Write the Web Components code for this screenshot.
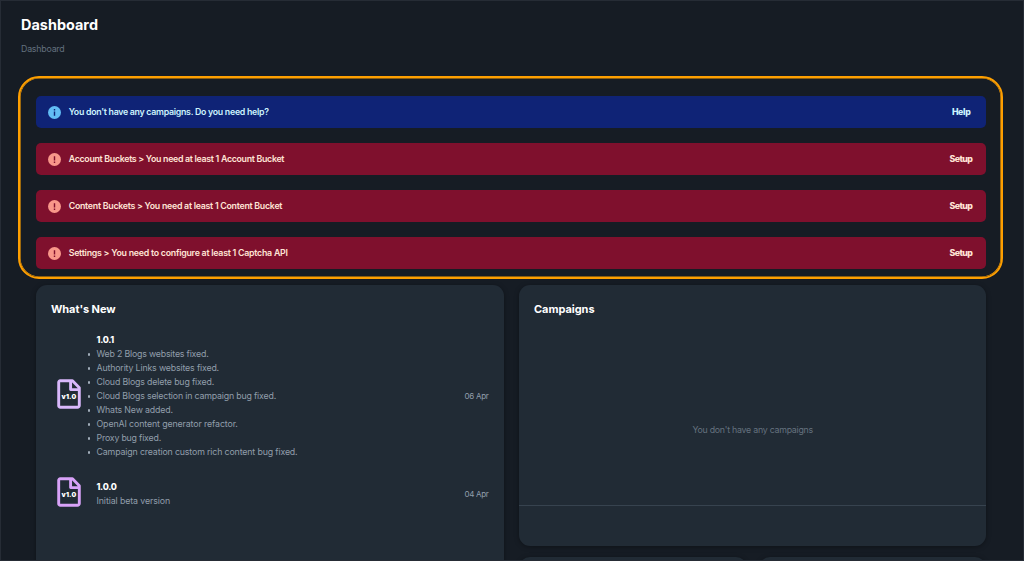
<!DOCTYPE html>
<html lang="en">
<head>
<meta charset="utf-8">
<title>Dashboard</title>
<style>
html, body { margin: 0; height: 100%; overflow: hidden; background: #161c24; }
body { font-family: Inter, "Liberation Sans", sans-serif; color: #fff; }
</style>
</head>
<body>
<dash-app></dash-app>
<script>
function define(name, html, setup) {
  const template = document.createElement('template');
  template.innerHTML = html;
  customElements.define(name, class extends HTMLElement {
    connectedCallback() {
      if (this.shadowRoot) return;
      this.attachShadow({ mode: 'open' }).append(template.content.cloneNode(true));
      if (setup) setup(this, this.shadowRoot);
    }
  });
}

/* A single line of text, tracked so that it fills the width given in "w". */
define('text-line', `
  <style>:host { display: block; white-space: nowrap; } span { display: inline-block; }</style>
  <span><slot></slot></span>`,
  (host, root) => {
    const span = root.querySelector('span');
    const want = parseFloat(host.getAttribute('w'));
    const count = host.textContent.trim().length;
    if (!want || !count) return;
    const have = span.getBoundingClientRect().width;
    if (have) span.style.letterSpacing = ((want - have) / count).toFixed(4) + 'px';
  });

define('page-header', `
  <style>
    :host { display: block; height: 75px; padding: 14px 0 0 20px; box-sizing: border-box; }
    .title { font-size: 14.4px; font-weight: 700; line-height: 20px; height: 20px; }
    .crumb { font-size: 8.8px; line-height: 12px; color: #63707e; margin-top: 8px; font-weight: 400; }
  </style>
  <text-line class="title" w="77">Dashboard</text-line>
  <text-line class="crumb" w="43.5">Dashboard</text-line>`);

define('alert-bar', `
  <style>
    :host { display: flex; align-items: center; height: 32px; border-radius: 5px; box-sizing: border-box;
      padding: 0 14px 0 11.5px; background: #7f102d; color: #ffe4d6; font-size: 8.8px; font-weight: 600; line-height: 14px; }
    :host([kind=info]) { background: #0f2376; color: #cdf3fe; padding-right: 16px; }
    svg { width: 13px; height: 13px; margin-right: 8px; flex: none; }
    .disc { fill: #f8978a; } .mark { fill: #7f102d; }
    :host([kind=info]) .disc { fill: #62bdf5; } :host([kind=info]) .mark { fill: #0f2376; }
    :host([kind=info]) svg { transform: rotate(180deg); }
    .action { margin-left: auto; font-weight: 800; }
  </style>
  <svg viewBox="0 0 13 13"><circle class="disc" cx="6.5" cy="6.5" r="6.5"/>
    <path class="mark" d="M5.8 3.3h1.4v4.1H5.8zM5.8 8.5h1.4v1.4H5.8z"/></svg>
  <slot></slot>
  <div class="action"><slot name="action"></slot></div>`);

define('alert-group', `
  <style>
    :host { display: flex; flex-direction: column; gap: 15px; box-sizing: border-box;
      margin: 0 20px 0 17px; height: 203px; padding: 18.4px 14.6px 0 16.2px;
      border: 2px solid #fe9f00; box-shadow: inset 0 0 0 0.6px #fe9f00; border-radius: 21px; }
  </style><slot></slot>`);

define('panel-card', `
  <style>
    :host { display: flex; flex-direction: column; box-sizing: border-box; background: #212b35; border-radius: 11px;
      box-shadow: 0 1px 5px rgba(0,0,0,.34); }
    .head { padding: 15.6px 15px 0; font-size: 11px; font-weight: 700; line-height: 16px; height: 16px; }
  </style>
  <div class="head"><slot name="title"></slot></div><slot></slot>`);

define('release-row', `
  <style>
    :host { display: flex; align-items: center; padding: 0 15.5px 0 21px; }
    .icon { display: grid; width: 24px; height: 30px; margin-right: 15.5px; margin-top: -3px; flex: none; }
    .icon > * { grid-area: 1 / 1; }
    .icon text-line { align-self: center; justify-self: center; font-size: 6.7px; font-weight: 900; line-height: 8px; padding-top: 5px; }
    svg { width: 24px; height: 30px; fill: none; stroke-width: 2.9; stroke-linejoin: round; }
    .body { font-size: 8.8px; line-height: 14px; color: #919eab; }
    .version { font-weight: 800; color: #fff; }
    .date { margin-left: auto; font-size: 8px; line-height: 12px; color: #919eab; }
  </style>
  <div class="icon">
    <svg viewBox="0 0 24 30"><path class="page" d="M3.2 1.8h12.3l6.8 7v17.7a1.8 1.8 0 0 1-1.8 1.8H3.3a1.6 1.6 0 0 1-1.6-1.6V3.3a1.5 1.5 0 0 1 1.5-1.5zM13.6 2v8.6h8.2"/></svg>
    <text-line w="15">v1.0</text-line>
  </div>
  <div class="body"><div class="version"><slot name="version"></slot></div><slot></slot></div>
  <div class="date"><slot name="date"></slot></div>`,
  (host, root) => root.querySelector('.page').setAttribute('stroke', host.getAttribute('tint')));

define('change-item', `
  <style>
    :host { display: flex; align-items: center; height: 14px; margin-left: -9px; }
    i { width: 2.5px; height: 2.5px; border-radius: 50%; background: #a1adb9; margin: 2px 6.5px 0 0; }
  </style><i></i><slot></slot>`);

define('dash-app', `
  <style>
    :host { display: block; height: 561px; box-sizing: border-box; border: 1px solid #262c35; overflow: hidden; background: #161c24; }
    .grid { display: grid; grid-template-columns: 468px 467.4px; column-gap: 15px; padding: 6px 0 0 35px; align-items: start; }
    .news { height: 310px; }
    .campaigns { height: 261px; }
    .list { display: flex; flex-direction: column; padding-top: 16px; gap: 21px; }
    .empty { height: 189px; flex: none; display: flex; align-items: center; justify-content: center;
      font-size: 8.8px; color: #65727f; box-sizing: border-box; padding-top: 37px; border-bottom: 1px solid #37434f; }
    .pair { display: grid; grid-template-columns: 227.5px 227.5px; gap: 12.4px; margin-top: 10.5px; }
    .pair panel-card { height: 60px; }
  </style>
  <page-header></page-header>
  <alert-group>
    <alert-bar kind="info"><text-line w="200">You don't have any campaigns. Do you need help?</text-line><text-line slot="action" w="18.5">Help</text-line></alert-bar>
    <alert-bar><text-line w="215.5">Account Buckets &gt; You need at least 1 Account Bucket</text-line><text-line slot="action" w="23">Setup</text-line></alert-bar>
    <alert-bar><text-line w="213.5">Content Buckets &gt; You need at least 1 Content Bucket</text-line><text-line slot="action" w="23">Setup</text-line></alert-bar>
    <alert-bar><text-line w="219">Settings &gt; You need to configure at least 1 Captcha API</text-line><text-line slot="action" w="23">Setup</text-line></alert-bar>
  </alert-group>
  <div class="grid">
    <panel-card class="news">
      <text-line slot="title" w="64.5">What's New</text-line>
      <div class="list">
        <release-row tint="#d9b8fb">
          <text-line slot="version" w="17.5">1.0.1</text-line>
          <change-item><text-line w="112">Web 2 Blogs websites fixed.</text-line></change-item>
          <change-item><text-line w="122.5">Authority Links websites fixed.</text-line></change-item>
          <change-item><text-line w="117.5">Cloud Blogs delete bug fixed.</text-line></change-item>
          <change-item><text-line w="179.5">Cloud Blogs selection in campaign bug fixed.</text-line></change-item>
          <change-item><text-line w="76.5">Whats New added.</text-line></change-item>
          <change-item><text-line w="141.3">OpenAI content generator refactor.</text-line></change-item>
          <change-item><text-line w="64.5">Proxy bug fixed.</text-line></change-item>
          <change-item><text-line w="201">Campaign creation custom rich content bug fixed.</text-line></change-item>
          <text-line slot="date" w="24">06 Apr</text-line>
        </release-row>
        <release-row tint="#d8a2f8">
          <text-line slot="version" w="20">1.0.0</text-line>
          <text-line w="73.5">Initial beta version</text-line>
          <text-line slot="date" w="24">04 Apr</text-line>
        </release-row>
      </div>
    </panel-card>
    <div>
      <panel-card class="campaigns">
        <text-line slot="title" w="60.5">Campaigns</text-line>
        <div class="empty"><text-line w="120.5">You don't have any campaigns</text-line></div>
      </panel-card>
      <div class="pair"><panel-card></panel-card><panel-card></panel-card></div>
    </div>
  </div>`);
</script>
</body>
</html>
